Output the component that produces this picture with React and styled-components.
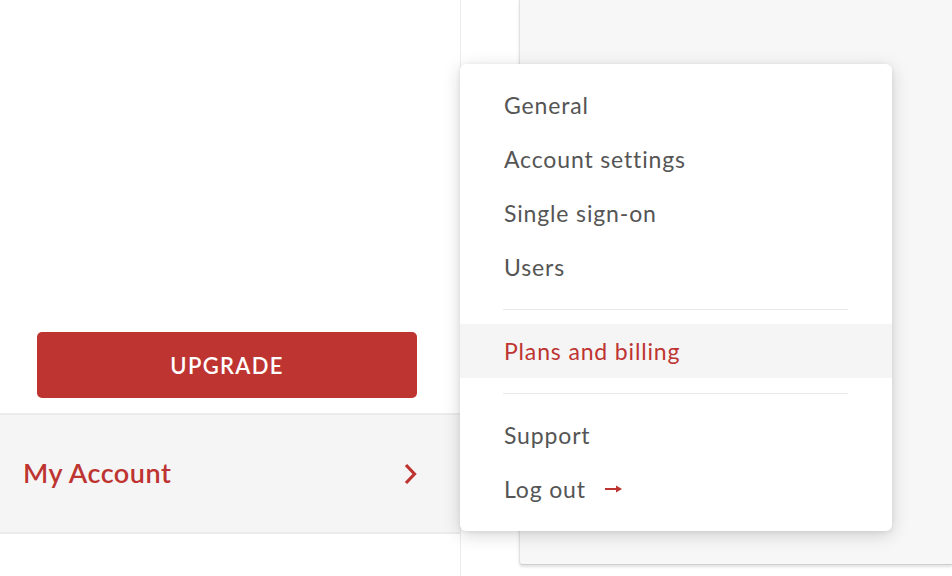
import React from "react";
import styled, { createGlobalStyle } from "styled-components";

const Global = createGlobalStyle`
  html, body { margin: 0; padding: 0; background: #fff; }
  body { font-family: "Lato", "Open Sans", sans-serif; -webkit-font-smoothing: antialiased; }
  #root { width: 952px; height: 576px; overflow: hidden; }
`;

const RED = "#be3431";

const Page = styled.div`
  position: relative;
  display: flex;
  width: 952px;
  height: 576px;
  background: #fff;
`;

const Sidebar = styled.aside`
  width: 461px;
  flex: none;
  box-sizing: border-box;
  border-right: 1px solid #ececec;
  display: flex;
  flex-direction: column;
  justify-content: flex-end;
  padding-bottom: 42px;
`;

const UpgradeWrap = styled.div`
  padding: 0 43px 15px 37px;
`;

const UpgradeButton = styled.button`
  width: 100%;
  height: 66px;
  border: none;
  border-radius: 5px;
  background: ${RED};
  color: #fff;
  font-family: inherit;
  font-size: 22px;
  font-weight: 600;
  letter-spacing: 1.3px;
  text-transform: uppercase;
  cursor: pointer;
`;

const AccountRow = styled.div`
  height: 117px;
  background: #f5f5f5;
  border-top: 2px solid #ebebeb;
  border-bottom: 2px solid #ebebeb;
  display: flex;
  align-items: center;
  justify-content: space-between;
  padding: 0 43px 0 23px;
`;

const AccountLabel = styled.span`
  color: ${RED};
  font-size: 27px;
  font-weight: 600;
  letter-spacing: 0.5px;
  margin-top: -2px;
`;

const Gutter = styled.div`
  width: 58px;
  flex: none;
`;

const MainPanel = styled.main`
  flex: 1;
  height: 565px;
  box-sizing: border-box;
  background: #f7f7f7;
  border-left: 1px solid #e2e2e2;
  border-bottom: 1px solid #cfcfcf;
  border-bottom-left-radius: 4px;
  box-shadow: 0 2px 3px rgba(0, 0, 0, 0.12);
`;

const Menu = styled.nav`
  position: absolute;
  left: 460px;
  top: 64px;
  width: 432px;
  box-sizing: border-box;
  padding: 14px 0 15px;
  background: #fff;
  border-radius: 6px;
  box-shadow: 0 4px 18px rgba(0, 0, 0, 0.16), 0 1px 4px rgba(0, 0, 0, 0.08);
`;

const MenuItem = styled.a`
  display: flex;
  align-items: center;
  gap: 19px;
  height: 54px;
  padding-left: 44px;
  box-sizing: border-box;
  font-size: 23px;
  letter-spacing: 0.85px;
  color: ${(p) => (p.$active ? RED : "#555")};
  background: ${(p) => (p.$active ? "#f5f5f5" : "transparent")};
  text-decoration: none;
`;

const Divider = styled.hr`
  margin: 15px 44px 14px 43px;
  border: none;
  border-top: 1px solid #e9e9e9;
`;

const Chevron = () => (
  <svg width="14" height="22" viewBox="0 0 14 22" fill="none">
    <polyline points="3,2 11.5,11 3,20" stroke={RED} strokeWidth="3.2" />
  </svg>
);

const Arrow = () => (
  <svg width="17" height="8" viewBox="0 0 17 8">
    <rect x="0" y="3" width="12" height="2" fill={RED} />
    <polygon points="11,0.5 17,4 11,7.5" fill={RED} />
  </svg>
);

export default function App() {
  return (
    <>
      <Global />
      <Page>
        <Sidebar>
          <UpgradeWrap>
            <UpgradeButton>Upgrade</UpgradeButton>
          </UpgradeWrap>
          <AccountRow>
            <AccountLabel>My Account</AccountLabel>
            <Chevron />
          </AccountRow>
        </Sidebar>
        <Gutter />
        <MainPanel />
        <Menu>
          <MenuItem>General</MenuItem>
          <MenuItem>Account settings</MenuItem>
          <MenuItem>Single sign-on</MenuItem>
          <MenuItem>Users</MenuItem>
          <Divider />
          <MenuItem $active>Plans and billing</MenuItem>
          <Divider />
          <MenuItem>Support</MenuItem>
          <MenuItem>
            Log out <Arrow />
          </MenuItem>
        </Menu>
      </Page>
    </>
  );
}
